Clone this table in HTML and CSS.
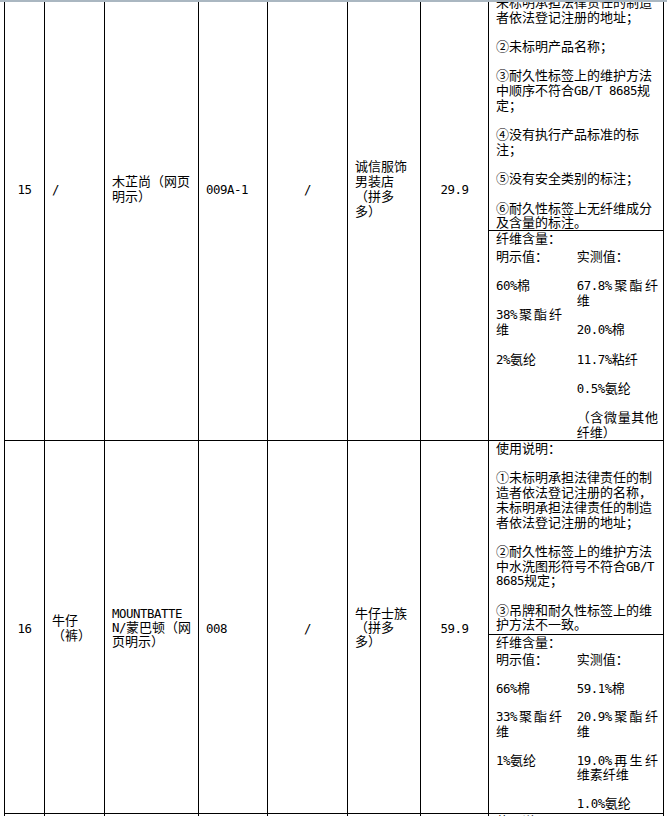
FILE: index.html
```html
<!DOCTYPE html>
<html lang="zh-CN">
<head>
<meta charset="utf-8">
<title>抽检结果</title>
<link rel="stylesheet" href="styles.css">
</head>
<body>
<div class="sheet">
  <div class="tbl">
    <!-- 15 -->
    <div class="c span2 mid ctr"><div><span class="m">15</span></div></div>
    <div class="c span2 mid"><div><span class="m">/</span></div></div>
    <div class="c span2 mid"><div>木芷尚（网页<br>明示）</div></div>
    <div class="c span2 mid"><div><span class="m">009A-1</span></div></div>
    <div class="c span2 mid ctr"><div><span class="m">/</span></div></div>
    <div class="c span2 mid"><div>诚信服饰<br>男装店<br>（拼多<br>多）</div></div>
    <div class="c span2 mid ctr"><div><span class="m">29.9</span></div></div>
    <div class="c desc">
      <p>使用说明：</p>
      <p>①未标明承担法律责任的制造者依法登记注册的名称，未标明承担法律责任的制造者依法登记注册的地址；</p>
      <p>②未标明产品名称；</p>
      <p>③耐久性标签上的维护方法中顺序不符合<span class="m">GB/T 8685</span>规定；</p>
      <p>④没有执行产品标准的标注；</p>
      <p>⑤没有安全类别的标注；</p>
      <p>⑥耐久性标签上无纤维成分及含量的标注。</p>
    </div>
    <div class="c fib">
      <p class="hd">纤维含量：</p>
      <div class="cols">
        <div>
          <p>明示值：</p>
          <p><span class="m">60%</span>棉</p>
          <p><span class="m">38%</span>聚酯纤维</p>
          <p><span class="m">2%</span>氨纶</p>
        </div>
        <div>
          <p>实测值：</p>
          <p><span class="m">67.8%</span>聚酯纤维</p>
          <p><span class="m">20.0%</span>棉</p>
          <p><span class="m">11.7%</span>粘纤</p>
          <p><span class="m">0.5%</span>氨纶</p>
          <p>（含微量其他纤维）</p>
        </div>
      </div>
    </div>

    <!-- 16 -->
    <div class="c span2 mid ctr"><div><span class="m">16</span></div></div>
    <div class="c span2 mid"><div>牛仔<br>（裤）</div></div>
    <div class="c span2 mid tl"><div><span class="m">MOUNTBATTE</span><br><span class="m">N/</span>蒙巴顿（网<br>页明示）</div></div>
    <div class="c span2 mid"><div><span class="m">008</span></div></div>
    <div class="c span2 mid ctr"><div><span class="m">/</span></div></div>
    <div class="c span2 mid tl"><div>牛仔士族<br>（拼多<br>多）</div></div>
    <div class="c span2 mid ctr"><div><span class="m">59.9</span></div></div>
    <div class="c desc">
      <p>使用说明：</p>
      <p>①未标明承担法律责任的制造者依法登记注册的名称，未标明承担法律责任的制造者依法登记注册的地址；</p>
      <p>②耐久性标签上的维护方法中水洗图形符号不符合<span class="m">GB/T 8685</span>规定；</p>
      <p>③吊牌和耐久性标签上的维护方法不一致。</p>
    </div>
    <div class="c fib tight">
      <p class="hd">纤维含量：</p>
      <div class="cols">
        <div>
          <p>明示值：</p>
          <p><span class="m">66%</span>棉</p>
          <p><span class="m">33%</span>聚酯纤维</p>
          <p><span class="m">1%</span>氨纶</p>
        </div>
        <div>
          <p>实测值：</p>
          <p><span class="m">59.1%</span>棉</p>
          <p><span class="m">20.9%</span>聚酯纤维</p>
          <p><span class="m">19.0%</span>再生纤维素纤维</p>
          <p><span class="m">1.0%</span>氨纶</p>
        </div>
      </div>
    </div>

    <!-- next row (cut off) -->
    <div class="c"></div>
    <div class="c"></div>
    <div class="c"></div>
    <div class="c"></div>
    <div class="c"></div>
    <div class="c"></div>
    <div class="c"></div>
    <div class="c desc">
      <p>使用说明：</p>
    </div>
  </div>
</div>
</body>
</html>
```
FILE: styles.css
```css
html, body {
  margin: 0;
  padding: 0;
  background: #fff;
}

.sheet {
  position: relative;
  width: 667px;
  height: 816px;
  overflow: hidden;
  background: #fff;
  color: #000;
  font-family: "Noto Sans CJK SC", "Noto Sans", sans-serif;
  font-size: 13px;
}

.sheet::after {
  content: "";
  position: absolute;
  left: 0;
  right: 0;
  top: 0;
  height: 2px;
  background: #aab7c1;
}

.tbl {
  display: grid;
  grid-template-columns: 39px 59px 93px 68px 79px 72px 67px 174px;
  grid-template-rows: 294px 209px 193px 178px 300px;
  gap: 1px;
  padding: 1px;
  width: max-content;
  margin: -65px 0 0 4px;
  background: #000;
}

.c {
  background: #fff;
  overflow: hidden;
  min-width: 0;
}

.span2 {
  grid-row: span 2;
}

.mid {
  display: flex;
  align-items: center;
  padding-left: 7px;
  line-height: 15px;
  white-space: nowrap;
}

.mid.tl {
  line-height: 14px;
}

.ctr {
  justify-content: center;
  padding-left: 0;
}

.m {
  font-family: "DejaVu Sans Mono", "Liberation Mono", monospace;
  font-size: 12.4px;
  letter-spacing: -0.45px;
  line-height: 0;
}

.desc {
  padding: 0 5px 0 7px;
  line-height: 14.7px;
}

.desc p {
  margin: 0 0 14.7px;
}

.desc p:last-child {
  margin-bottom: 0;
}

.fib {
  padding: 0 5px 0 7px;
  line-height: 14.7px;
}

.fib p {
  margin: 0;
}

.fib .hd {
  margin-bottom: 3px;
}

.fib .cols {
  display: grid;
  grid-template-columns: 66px 1fr;
  column-gap: 14.7px;
}

.fib .cols p {
  margin: 0 0 14.7px;
  text-align: justify;
}

.fib.tight .hd {
  margin-bottom: 2px;
}

.fib.tight .cols {
  line-height: 14.4px;
}

.fib.tight .cols p {
  margin-bottom: 14.4px;
}
```
